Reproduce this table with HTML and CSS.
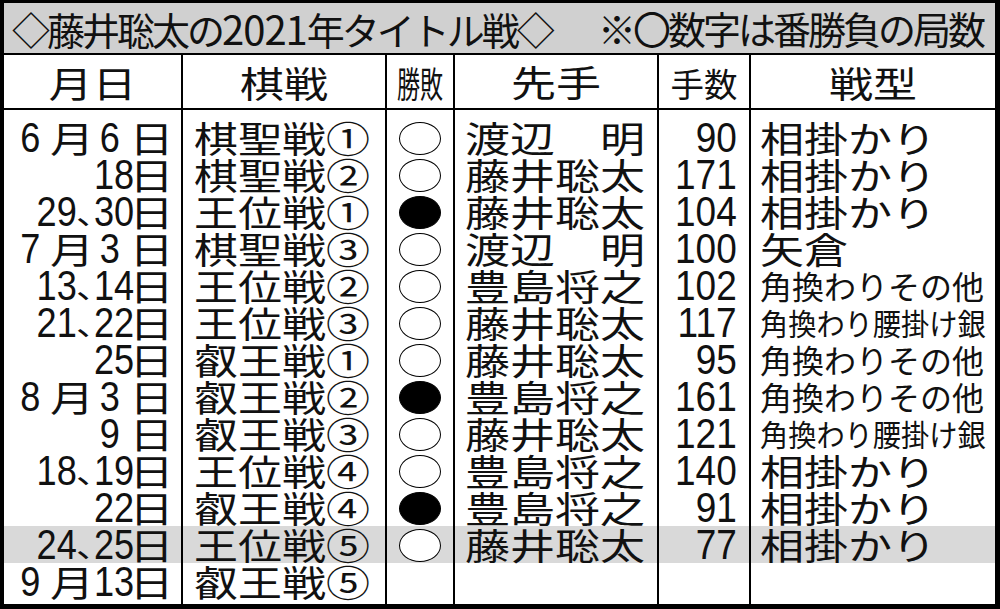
FILE: index.html
```html
<!DOCTYPE html>
<html lang="ja">
<head>
<meta charset="utf-8">
<title>藤井聡太の2021年タイトル戦</title>
<link rel="stylesheet" href="styles.css">
</head>
<body>
<div class="board">
  <div class="title">
    <span class="title-l">◇藤井聡太の<span class="title-num">2021</span>年タイトル戦◇</span>
    <span class="title-r">※〇数字は番勝負の局数</span>
  </div>
  <table class="games">
    <colgroup>
      <col class="w-date"><col class="w-kisen"><col class="w-res"><col class="w-sente"><col class="w-moves"><col class="w-type">
    </colgroup>
    <thead>
      <tr>
        <th><div class="hcell"><span class="j">月日</span></div></th>
        <th><div class="hcell"><span class="j">棋戦</span></div></th>
        <th><div class="hcell"><span class="j h-narrow">勝敗</span></div></th>
        <th><div class="hcell"><span class="j h-sente">先手</span></div></th>
        <th><div class="hcell"><span class="j h-moves">手数</span></div></th>
        <th><div class="hcell"><span class="j">戦型</span></div></th>
      </tr>
    </thead>
    <tbody>
      <tr class="pad-top"><td></td><td></td><td></td><td></td><td></td><td></td></tr>

      <tr>
        <td><div class="cell date"><span class="pre"><span class="d mnum">6</span><span class="j mo">月</span></span><span class="d day one">6</span><span class="j ni">日</span></div></td>
        <td><div class="cell kisen"><span class="j">棋聖戦①</span></div></td>
        <td><div class="cell res"><span class="mark"></span></div></td>
        <td><div class="cell sente"><span class="j">渡辺　明</span></div></td>
        <td><div class="cell moves"><span class="d">90</span></div></td>
        <td><div class="cell type"><span class="j">相掛かり</span></div></td>
      </tr>
      <tr>
        <td><div class="cell date"><span class="pre"></span><span class="d day">18</span><span class="j ni">日</span></div></td>
        <td><div class="cell kisen"><span class="j">棋聖戦②</span></div></td>
        <td><div class="cell res"><span class="mark"></span></div></td>
        <td><div class="cell sente"><span class="j">藤井聡太</span></div></td>
        <td><div class="cell moves"><span class="d">171</span></div></td>
        <td><div class="cell type"><span class="j">相掛かり</span></div></td>
      </tr>
      <tr>
        <td><div class="cell date"><span class="pre"><span class="d">29</span><span class="j comma">､</span></span><span class="d day">30</span><span class="j ni">日</span></div></td>
        <td><div class="cell kisen"><span class="j">王位戦①</span></div></td>
        <td><div class="cell res"><span class="mark loss"></span></div></td>
        <td><div class="cell sente"><span class="j">藤井聡太</span></div></td>
        <td><div class="cell moves"><span class="d">104</span></div></td>
        <td><div class="cell type"><span class="j">相掛かり</span></div></td>
      </tr>
      <tr>
        <td><div class="cell date"><span class="pre"><span class="d mnum">7</span><span class="j mo">月</span></span><span class="d day one">3</span><span class="j ni">日</span></div></td>
        <td><div class="cell kisen"><span class="j">棋聖戦③</span></div></td>
        <td><div class="cell res"><span class="mark"></span></div></td>
        <td><div class="cell sente"><span class="j">渡辺　明</span></div></td>
        <td><div class="cell moves"><span class="d">100</span></div></td>
        <td><div class="cell type"><span class="j">矢倉</span></div></td>
      </tr>
      <tr>
        <td><div class="cell date"><span class="pre"><span class="d">13</span><span class="j comma">､</span></span><span class="d day">14</span><span class="j ni">日</span></div></td>
        <td><div class="cell kisen"><span class="j">王位戦②</span></div></td>
        <td><div class="cell res"><span class="mark"></span></div></td>
        <td><div class="cell sente"><span class="j">豊島将之</span></div></td>
        <td><div class="cell moves"><span class="d">102</span></div></td>
        <td><div class="cell type"><span class="j fit7">角換わりその他</span></div></td>
      </tr>
      <tr>
        <td><div class="cell date"><span class="pre"><span class="d">21</span><span class="j comma">､</span></span><span class="d day">22</span><span class="j ni">日</span></div></td>
        <td><div class="cell kisen"><span class="j">王位戦③</span></div></td>
        <td><div class="cell res"><span class="mark"></span></div></td>
        <td><div class="cell sente"><span class="j">藤井聡太</span></div></td>
        <td><div class="cell moves"><span class="d">117</span></div></td>
        <td><div class="cell type"><span class="j fit8">角換わり腰掛け銀</span></div></td>
      </tr>
      <tr>
        <td><div class="cell date"><span class="pre"></span><span class="d day">25</span><span class="j ni">日</span></div></td>
        <td><div class="cell kisen"><span class="j">叡王戦①</span></div></td>
        <td><div class="cell res"><span class="mark"></span></div></td>
        <td><div class="cell sente"><span class="j">藤井聡太</span></div></td>
        <td><div class="cell moves"><span class="d">95</span></div></td>
        <td><div class="cell type"><span class="j fit7">角換わりその他</span></div></td>
      </tr>
      <tr>
        <td><div class="cell date"><span class="pre"><span class="d mnum">8</span><span class="j mo">月</span></span><span class="d day one">3</span><span class="j ni">日</span></div></td>
        <td><div class="cell kisen"><span class="j">叡王戦②</span></div></td>
        <td><div class="cell res"><span class="mark loss"></span></div></td>
        <td><div class="cell sente"><span class="j">豊島将之</span></div></td>
        <td><div class="cell moves"><span class="d">161</span></div></td>
        <td><div class="cell type"><span class="j fit7">角換わりその他</span></div></td>
      </tr>
      <tr>
        <td><div class="cell date"><span class="pre"></span><span class="d day one">9</span><span class="j ni">日</span></div></td>
        <td><div class="cell kisen"><span class="j">叡王戦③</span></div></td>
        <td><div class="cell res"><span class="mark"></span></div></td>
        <td><div class="cell sente"><span class="j">藤井聡太</span></div></td>
        <td><div class="cell moves"><span class="d">121</span></div></td>
        <td><div class="cell type"><span class="j fit8">角換わり腰掛け銀</span></div></td>
      </tr>
      <tr>
        <td><div class="cell date"><span class="pre"><span class="d">18</span><span class="j comma">､</span></span><span class="d day">19</span><span class="j ni">日</span></div></td>
        <td><div class="cell kisen"><span class="j">王位戦④</span></div></td>
        <td><div class="cell res"><span class="mark"></span></div></td>
        <td><div class="cell sente"><span class="j">豊島将之</span></div></td>
        <td><div class="cell moves"><span class="d">140</span></div></td>
        <td><div class="cell type"><span class="j">相掛かり</span></div></td>
      </tr>
      <tr>
        <td><div class="cell date"><span class="pre"></span><span class="d day">22</span><span class="j ni">日</span></div></td>
        <td><div class="cell kisen"><span class="j">叡王戦④</span></div></td>
        <td><div class="cell res"><span class="mark loss"></span></div></td>
        <td><div class="cell sente"><span class="j">豊島将之</span></div></td>
        <td><div class="cell moves"><span class="d">91</span></div></td>
        <td><div class="cell type"><span class="j">相掛かり</span></div></td>
      </tr>
      <tr class="hl">
        <td><div class="cell date"><span class="pre"><span class="d">24</span><span class="j comma">､</span></span><span class="d day">25</span><span class="j ni">日</span></div></td>
        <td><div class="cell kisen"><span class="j">王位戦⑤</span></div></td>
        <td><div class="cell res"><span class="mark"></span></div></td>
        <td><div class="cell sente"><span class="j">藤井聡太</span></div></td>
        <td><div class="cell moves"><span class="d">77</span></div></td>
        <td><div class="cell type"><span class="j">相掛かり</span></div></td>
      </tr>
      <tr>
        <td><div class="cell date"><span class="pre"><span class="d mnum">9</span><span class="j mo">月</span></span><span class="d day">13</span><span class="j ni">日</span></div></td>
        <td><div class="cell kisen"><span class="j">叡王戦⑤</span></div></td>
        <td><div class="cell res"></div></td>
        <td><div class="cell sente"></div></td>
        <td><div class="cell moves"></div></td>
        <td><div class="cell type"></div></td>
      </tr>

      <tr class="pad-bottom"><td></td><td></td><td></td><td></td><td></td><td></td></tr>
    </tbody>
  </table>
</div>
</body>
</html>
```

FILE: styles.css
```css
html, body {
  margin: 0;
  padding: 0;
  background: #fff;
}

body {
  font-family: "Noto Sans CJK JP", sans-serif;
  color: #111;
}

.board {
  width: 1000px;
  height: 609px;
  box-sizing: border-box;
  border-style: solid;
  border-color: #000;
  border-width: 3px 5px 5px 4px;
  background: #fff;
}

/* ---------- title bar ---------- */
.title {
  height: 50px;
  background: #d0d0d0;
  border-bottom: 2px solid #000;
  display: flex;
  align-items: center;
  justify-content: space-between;
  padding: 0 12px 0 8px;
  font-size: 38px;
  letter-spacing: -3px;
  line-height: 1;
  white-space: nowrap;
}

.title-num {
  letter-spacing: -1px;
  font-size: 40px;
}

/* ---------- table ---------- */
.games {
  width: 991px;
  table-layout: fixed;
  border-collapse: separate;
  border-spacing: 0;
}

.w-date  { width: 179px; }
.w-kisen { width: 204px; }
.w-res   { width: 68px; }
.w-sente { width: 204px; }
.w-moves { width: 92px; }
.w-type  { width: 244px; }

.games th,
.games td {
  padding: 0;
  border-right: 2px solid #000;
  vertical-align: middle;
  white-space: nowrap;
}

.games th:last-child,
.games td:last-child {
  border-right: none;
}

.games th {
  border-bottom: 2px solid #000;
  font-weight: normal;
}

.hcell {
  height: 53px;
  display: flex;
  align-items: center;
  justify-content: center;
}

.pad-top td { height: 9px; }
.pad-bottom td { height: 4px; }

.hl td { background: #d9d9d9; }

.cell {
  height: 37px;
  display: flex;
  align-items: center;
}

/* text pieces */
.j {
  display: inline-block;
  font-family: "Noto Sans CJK JP", sans-serif;
  font-size: 44px;
  line-height: 1;
  transform: scaleY(0.82);
}

.d {
  display: inline-block;
  font-family: "Liberation Sans", "Arimo", sans-serif;
  font-size: 43px;
  line-height: 1;
  transform: scaleX(0.86);
  transform-origin: right center;
}

.cell .j,
.cell .d {
  line-height: 37px;
}

.h-narrow {
  font-size: 36px;
  transform: scaleX(0.64);
}

.h-sente { font-size: 45px; }

.h-moves {
  font-size: 36px;
  transform: scaleX(0.93) scaleY(0.92);
}

/* date column */
.date {
  display: grid;
  grid-template-columns: 1fr 40px 35px;
  align-items: center;
  padding-right: 12px;
}

.date .d { font-size: 42px; }

.pre {
  justify-self: end;
  display: flex;
  align-items: center;
}

.mnum { margin-right: 10px; }

.mo { width: 44px; }

.comma {
  font-size: 36px;
  width: 17px;
  overflow: visible;
}

.date .day {
  display: flex;
  justify-content: center;
  transform-origin: center center;
}

.date .day.one { padding-right: 10px; }

.ni {
  display: flex;
  justify-content: center;
}

/* other columns */
.kisen { padding-left: 11px; }

.res { justify-content: center; }

.mark {
  display: block;
  width: 42px;
  height: 33px;
  box-sizing: border-box;
  border: 1.6px solid #000;
  border-radius: 50%;
  margin-top: 2px;
  background: #fff;
}

.mark.loss { background: #000; }

.sente { padding-left: 10px; }
.sente .j { font-size: 45px; }

.moves {
  justify-content: flex-end;
  padding-right: 12px;
}

.type { padding-left: 9px; }

.fit7 {
  font-size: 32px;
  transform: none;
}

.fit8 {
  font-size: 30px;
  transform: scaleX(0.94);
  transform-origin: left center;
}
```
